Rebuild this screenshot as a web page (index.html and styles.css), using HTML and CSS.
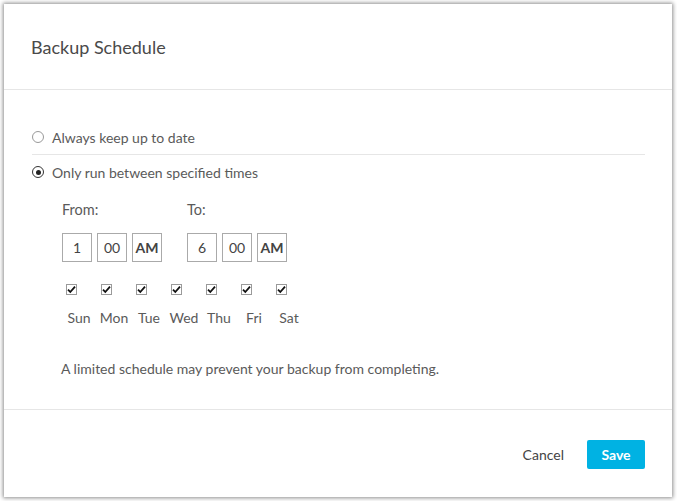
FILE: index.html
```html
<!DOCTYPE html>
<html>
<head>
<meta charset="utf-8">
<link rel="stylesheet" href="styles.css">
</head>
<body>
<div class="dialog">
  <div class="header"><h1 class="title">Backup Schedule</h1></div>
  <div class="content">
    <div class="option">
      <span class="radio"></span>
      <span class="option-label">Always keep up to date</span>
    </div>
    <div class="option">
      <span class="radio checked"></span>
      <span class="option-label">Only run between specified times</span>
    </div>
    <div class="schedule">
      <div class="times">
        <div class="time-group">
          <div class="time-label">From:</div>
          <div class="boxes">
            <div class="box">1</div>
            <div class="box">00</div>
            <div class="box bold">AM</div>
          </div>
        </div>
        <div class="time-group">
          <div class="time-label">To:</div>
          <div class="boxes">
            <div class="box">6</div>
            <div class="box">00</div>
            <div class="box bold">AM</div>
          </div>
        </div>
      </div>
      <div class="days">
        <div class="day"><span class="check"><svg viewBox="0 0 11 11" width="11" height="11"><rect x="0.5" y="0.5" width="10" height="10" fill="#fff" stroke="#9a9a9a"/><path d="M2 5.6 L4.3 8 L9 2.6" fill="none" stroke="#111" stroke-width="1.8"/></svg></span><span class="day-name">Sun</span></div>
        <div class="day"><span class="check"><svg viewBox="0 0 11 11" width="11" height="11"><rect x="0.5" y="0.5" width="10" height="10" fill="#fff" stroke="#9a9a9a"/><path d="M2 5.6 L4.3 8 L9 2.6" fill="none" stroke="#111" stroke-width="1.8"/></svg></span><span class="day-name">Mon</span></div>
        <div class="day"><span class="check"><svg viewBox="0 0 11 11" width="11" height="11"><rect x="0.5" y="0.5" width="10" height="10" fill="#fff" stroke="#9a9a9a"/><path d="M2 5.6 L4.3 8 L9 2.6" fill="none" stroke="#111" stroke-width="1.8"/></svg></span><span class="day-name">Tue</span></div>
        <div class="day"><span class="check"><svg viewBox="0 0 11 11" width="11" height="11"><rect x="0.5" y="0.5" width="10" height="10" fill="#fff" stroke="#9a9a9a"/><path d="M2 5.6 L4.3 8 L9 2.6" fill="none" stroke="#111" stroke-width="1.8"/></svg></span><span class="day-name">Wed</span></div>
        <div class="day"><span class="check"><svg viewBox="0 0 11 11" width="11" height="11"><rect x="0.5" y="0.5" width="10" height="10" fill="#fff" stroke="#9a9a9a"/><path d="M2 5.6 L4.3 8 L9 2.6" fill="none" stroke="#111" stroke-width="1.8"/></svg></span><span class="day-name">Thu</span></div>
        <div class="day"><span class="check"><svg viewBox="0 0 11 11" width="11" height="11"><rect x="0.5" y="0.5" width="10" height="10" fill="#fff" stroke="#9a9a9a"/><path d="M2 5.6 L4.3 8 L9 2.6" fill="none" stroke="#111" stroke-width="1.8"/></svg></span><span class="day-name">Fri</span></div>
        <div class="day"><span class="check"><svg viewBox="0 0 11 11" width="11" height="11"><rect x="0.5" y="0.5" width="10" height="10" fill="#fff" stroke="#9a9a9a"/><path d="M2 5.6 L4.3 8 L9 2.6" fill="none" stroke="#111" stroke-width="1.8"/></svg></span><span class="day-name">Sat</span></div>
      </div>
      <p class="note">A limited schedule may prevent your backup from completing.</p>
    </div>
  </div>
  <div class="footer">
    <span class="cancel">Cancel</span>
    <span class="save">Save</span>
  </div>
</div>
</body>
</html>
```
FILE: styles.css
```css
html, body {
  margin: 0;
  padding: 0;
  background: #fff;
}
body {
  font-family: Lato, "Open Sans", sans-serif;
  color: #555;
}
.dialog {
  margin: 4px;
  width: 668px;
  height: 493px;
  background: #fff;
  box-shadow: 0 0 4px 1px rgba(0,0,0,0.45);
  display: flex;
  flex-direction: column;
}
.header {
  height: 85px;
  display: flex;
  align-items: center;
  padding-left: 27px;
  border-bottom: 1px solid #e6e6e6;
}
.title {
  margin: 0;
  font-size: 18px;
  font-weight: 400;
  color: #4a4a4a;
}
.content {
  flex: 1;
  padding: 30px 27px 0 28px;
  border-bottom: 1px solid #e6e6e6;
}
.option {
  height: 34px;
  display: flex;
  align-items: center;
  font-size: 14px;
  color: #5a5a5a;
}
.option:first-child {
  border-bottom: 1px solid #e6e6e6;
}
.radio {
  width: 10px;
  height: 10px;
  border: 1px solid #999;
  border-radius: 50%;
  margin-right: 8px;
  position: relative;
  box-sizing: content-box;
}
.radio.checked {
  border-color: #333;
}
.radio.checked::after {
  content: "";
  position: absolute;
  left: 2.5px;
  top: 2.5px;
  width: 5px;
  height: 5px;
  border-radius: 50%;
  background: #222;
}
.schedule {
  padding-left: 30px;
  padding-top: 11px;
}
.times {
  display: flex;
  gap: 25px;
}
.time-label {
  font-size: 14.5px;
  line-height: 20px;
  height: 20px;
  margin-bottom: 13px;
  color: #5a5a5a;
}
.boxes {
  display: flex;
  gap: 5px;
}
.box {
  width: 28px;
  height: 27px;
  border: 1px solid #aaa;
  display: flex;
  align-items: center;
  justify-content: center;
  font-size: 14px;
  color: #444;
}
.box.bold {
  font-weight: 700;
}
.days {
  display: flex;
  margin-top: 22px;
  margin-left: -0.5px;
}
.day {
  width: 35px;
  display: flex;
  flex-direction: column;
}
.check {
  display: block;
  height: 11px;
  margin-left: 4.5px;
  line-height: 0;
}
.day-name {
  text-align: center;
  font-size: 14px;
  line-height: 17px;
  margin-top: 14px;
  color: #5a5a5a;
}
.note {
  margin: 34px 0 0 -1px;
  font-size: 14px;
  line-height: 17px;
  color: #5a5a5a;
}
.footer {
  height: 87px;
  display: flex;
  align-items: center;
  justify-content: flex-end;
  padding-right: 27px;
}
.cancel {
  font-size: 14px;
  color: #444;
  margin-right: 23px;
  margin-top: 2px;
}
.save {
  width: 58px;
  height: 29px;
  background: #00b2e3;
  color: #fff;
  font-weight: 700;
  font-size: 14px;
  border-radius: 2px;
  display: flex;
  align-items: center;
  justify-content: center;
  margin-top: 2px;
}
```
